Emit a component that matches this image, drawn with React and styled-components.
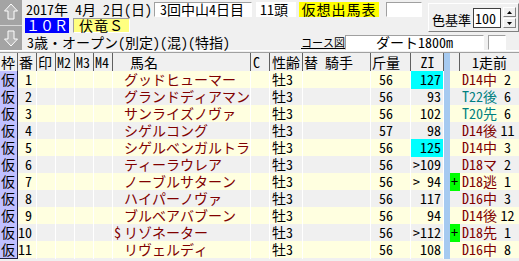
import React from 'react'
import styled, {createGlobalStyle} from 'styled-components'

const GlobalStyle = createGlobalStyle`
  body {
    margin: 0;
    background: #f0f0f0;
    font-family: "Noto Sans Mono CJK JP", "Noto Sans CJK JP", "DejaVu Sans Mono", monospace;
    font-size: 14px;
    color: #000;
  }
`

const Screen = styled.div`
  width: 519px;
  height: 261px;
  overflow: hidden;
  background: #f0f0f0;
`

const Top = styled.div`
  display: flex;
  height: 50px;
`

const ArrowCol = styled.div`
  width: 22px;
  display: flex;
  flex-direction: column;
  gap: 1px;
  background: #d8d8d8;
`

const ArrowBtn = styled.div`
  flex: 1;
  background: #a4a4a4;
  display: flex;
  align-items: center;
  justify-content: center;
`

const Main = styled.div`
  margin-left: 3px;
  padding-top: 2px;
  display: flex;
  flex-direction: column;
`

const Upper = styled.div`
  display: flex;
`

const LeftRows = styled.div`
  display: flex;
  flex-direction: column;
  gap: 1px;
`

const Line = styled.div`
  display: flex;
  align-items: center;
  height: 15px;
  line-height: 15px;
  white-space: nowrap;
  margin-top: ${p => p.$mt || 0}px;
`

const Text = styled.span`
  flex: none;
  width: ${p => p.$w}px;
  padding-left: ${p => p.$pl || 0}px;
  box-sizing: border-box;
`

const Box = styled.div`
  flex: none;
  box-sizing: border-box;
  width: ${p => p.$w}px;
  height: 15px;
  margin-left: ${p => p.$ml || 0}px;
  background: ${p => p.$bg || '#fff'};
  color: ${p => p.$fg || '#000'};
  border-top: 1px solid ${p => p.$flat ? 'transparent' : '#a0a0a0'};
  border-left: 1px solid ${p => p.$flat ? 'transparent' : '#a0a0a0'};
  border-bottom: 1px solid ${p => p.$flat ? 'transparent' : '#fff'};
  border-right: 1px solid ${p => p.$flat ? 'transparent' : '#fff'};
  text-align: ${p => p.$align || 'left'};
  padding-left: ${p => p.$pl || 0}px;
  letter-spacing: ${p => p.$ls || 0}px;
  line-height: 13px;
`

const Link = styled.span`
  flex: none;
  width: 44px;
  font-size: 11px;
  text-decoration: underline;
`

const ColorPanel = styled.div`
  box-sizing: border-box;
  margin-left: 6px;
  margin-top: 1px;
  width: 91px;
  height: 29px;
  border-top: 1px solid #fff;
  border-left: 1px solid #fff;
  border-bottom: 1px solid #808080;
  border-right: 1px solid #808080;
  display: flex;
  align-items: center;
  padding-left: 3px;
  white-space: nowrap;
`

const ColorLabel = styled.span`
  flex: none;
  margin-top: 4px;
  width: 41px;
  font-size: 13px;
`

const NumInput = styled.div`
  flex: none;
  box-sizing: border-box;
  width: 28px;
  height: 20px;
  margin-top: 1px;
  background: #fff;
  border: 1px solid #404040;
  line-height: 18px;
  padding-left: 1px;
`

const Spinner = styled.div`
  display: flex;
  flex-direction: column;
  margin-left: 2px;
  gap: 1px;
`

const SpinBtn = styled.div`
  box-sizing: border-box;
  width: 13px;
  height: 10px;
  background: #f0f0f0;
  border-top: 1px solid #fff;
  border-left: 1px solid #fff;
  border-bottom: 1px solid #808080;
  border-right: 1px solid #808080;
  display: flex;
  align-items: center;
  justify-content: center;
`

const Divider = styled.div`
  height: 1px;
  border-top: 1px solid #fff;
  border-bottom: 1px solid #a0a0a0;
`

const COLS = '18px 19px 19px 19px 19px 19px 138px 19px 33px 68px 40px 33px 6px 10px 59px'

const Row = styled.div`
  display: grid;
  grid-template-columns: ${COLS};
  height: ${p => p.$h}px;
  line-height: ${p => p.$h}px;
  background: ${p => p.$bg};
  white-space: nowrap;
`

const HeadCell = styled.div`
  border-right: 1px solid ${p => p.$noline ? 'transparent' : '#606060'};
  text-align: ${p => p.$align || 'left'};
  padding-left: ${p => p.$pl || 1}px;
  background: ${p => p.$bg || 'transparent'};
`

const Cell = styled.div`
  box-sizing: border-box;
  border-right: 1px solid ${p => p.$line || '#fff'};
  text-align: ${p => p.$align || 'left'};
  padding-left: ${p => p.$pl || 0}px;
  padding-right: ${p => p.$pr || 0}px;
  background: ${p => p.$bg || 'transparent'};
  color: ${p => p.$fg || '#000'};
`

const WakuCell = styled.div`
  background: #c0c0ff;
  border-right: 1px solid #202040;
  border-bottom: 1px solid #202040;
  padding-left: 1px;
`

const Prefix = styled.span`
  display: inline-block;
  width: 10px;
`

const Last = styled.span`
  display: inline-block;
  width: 36px;
  color: ${p => p.$fg};
`

const LastNo = styled.span`
  display: inline-block;
  width: 19px;
  text-align: center;
`

function UpArrow() {
  return (
    <svg width="16" height="18" viewBox="0 0 16 18">
      <path d="M8 1 L1.5 8 L5 8 L5 16 L11 16 L11 8 L14.5 8 Z" fill="#b4b4b4" stroke="#fff" strokeWidth="1"/>
    </svg>
  )
}

function DownArrow() {
  return (
    <svg width="16" height="18" viewBox="0 0 16 18">
      <path d="M8 17 L1.5 10 L5 10 L5 2 L11 2 L11 10 L14.5 10 Z" fill="#b4b4b4" stroke="#fff" strokeWidth="1"/>
    </svg>
  )
}

const RED = '#800000'
const TEAL = '#008080'

const horses = [
  {no: 1, name: 'グッドヒューマー', kin: 56, zi: '127', hot: true, last: 'D14中', lc: RED, ln: 2},
  {no: 2, name: 'グランドディアマン', kin: 56, zi: '93', last: 'T22後', lc: TEAL, ln: 6},
  {no: 3, name: 'サンライズノヴァ', kin: 56, zi: '102', last: 'T20先', lc: TEAL, ln: 6},
  {no: 4, name: 'シゲルコング', kin: 57, zi: '98', last: 'D14後', lc: RED, ln: 11},
  {no: 5, name: 'シゲルベンガルトラ', kin: 56, zi: '125', hot: true, last: 'D14中', lc: RED, ln: 3},
  {no: 6, name: 'ティーラウレア', kin: 56, zi: '>109', last: 'D18マ', lc: RED, ln: 2},
  {no: 7, name: 'ノーブルサターン', kin: 56, zi: '> 94', plus: true, last: 'D18逃', lc: RED, ln: 1},
  {no: 8, name: 'ハイパーノヴァ', kin: 56, zi: '117', last: 'D16中', lc: RED, ln: 3},
  {no: 9, name: 'ブルベアバブーン', kin: 56, zi: '94', last: 'D14後', lc: RED, ln: 12},
  {no: 10, name: 'リゾネーター', mark: '$', kin: 56, zi: '>112', plus: true, last: 'D18先', lc: RED, ln: 1},
  {no: 11, name: 'リヴェルディ', kin: 56, zi: '108', last: 'D16中', lc: RED, ln: 8},
]

export default function App() {
  return (
    <>
      <GlobalStyle/>
      <Screen>
        <Top>
          <ArrowCol>
            <ArrowBtn><UpArrow/></ArrowBtn>
            <ArrowBtn><DownArrow/></ArrowBtn>
          </ArrowCol>
          <Main>
            <Upper>
              <LeftRows>
                <Line>
                  <Text $w={129} $pl={1}>2017年 4月 2日(日)</Text>
                  <Box $w={98} $pl={5}>3回中山4日目</Box>
                  <Box $w={40} $ml={4} $flat $pl={3}>11頭</Box>
                  <Box $w={80} $ml={3} $bg="#ffff00" $align="center" $flat $ls={1}>仮想出馬表</Box>
                  <Box $w={36} $ml={7}/>
                </Line>
                <Line>
                  <Box $w={44} $bg="#0000ff" $fg="#fff" $align="center" $flat>１０Ｒ</Box>
                  <Box $w={57} $ml={4} $bg="#ffff80" $align="center" $ls={1}>伏竜Ｓ</Box>
                </Line>
              </LeftRows>
              <ColorPanel>
                <ColorLabel>色基準</ColorLabel>
                <NumInput>100</NumInput>
                <Spinner>
                  <SpinBtn>
                    <svg width="5" height="3" viewBox="0 0 5 3"><path d="M2.5 0 L5 3 L0 3 Z" fill="#000"/></svg>
                  </SpinBtn>
                  <SpinBtn>
                    <svg width="5" height="3" viewBox="0 0 5 3"><path d="M0 0 L5 0 L2.5 3 Z" fill="#000"/></svg>
                  </SpinBtn>
                </Spinner>
              </ColorPanel>
            </Upper>
            <Line $mt={2}>
              <Text $w={276} $pl={2}>3歳・オープン(別定)(混)(特指)</Text>
              <Link>コース図</Link>
              <Box $w={139} $align="center">ダート1800m</Box>
              <Box $w={18} $ml={4}/>
            </Line>
          </Main>
        </Top>
        <Divider/>
        <Row $h={18} $bg="#f0f0f0">
          <HeadCell>枠</HeadCell>
          <HeadCell>番</HeadCell>
          <HeadCell>印</HeadCell>
          <HeadCell>M2</HeadCell>
          <HeadCell>M3</HeadCell>
          <HeadCell>M4</HeadCell>
          <HeadCell $pl={17}>馬名</HeadCell>
          <HeadCell $pl={2}>C</HeadCell>
          <HeadCell $pl={2}>性齢</HeadCell>
          <HeadCell>替 騎手</HeadCell>
          <HeadCell>斤量</HeadCell>
          <HeadCell $align="center">ZI</HeadCell>
          <HeadCell $noline $bg="#a6caf0"/>
          <HeadCell/>
          <HeadCell $noline $align="center">1走前</HeadCell>
        </Row>
        {horses.map((h, i) => (
          <Row key={h.no} $h={17} $bg={i % 2 === 0 ? '#ffffe0' : '#f0f0f0'}>
            <WakuCell>仮</WakuCell>
            <Cell $align="right" $pr={4}>{h.no}</Cell>
            <Cell/>
            <Cell/>
            <Cell/>
            <Cell/>
            <Cell $fg={RED} $pl={1}><Prefix>{h.mark}</Prefix>{h.name}</Cell>
            <Cell/>
            <Cell $pl={2}>牡3</Cell>
            <Cell/>
            <Cell $pl={8}>{h.kin}</Cell>
            <Cell $align="right" $pr={2} $bg={h.hot ? '#00ffff' : undefined}>{h.zi}</Cell>
            <Cell $line="transparent" $bg="#a6caf0"/>
            <Cell $line="transparent" $bg={h.plus ? '#00ff00' : undefined} $align="center">{h.plus ? '+' : ''}</Cell>
            <Cell $line="transparent" $pl={2}>
              <Last $fg={h.lc}>{h.last}</Last>
              <LastNo>{h.ln}</LastNo>
            </Cell>
          </Row>
        ))}
      </Screen>
    </>
  )
}
